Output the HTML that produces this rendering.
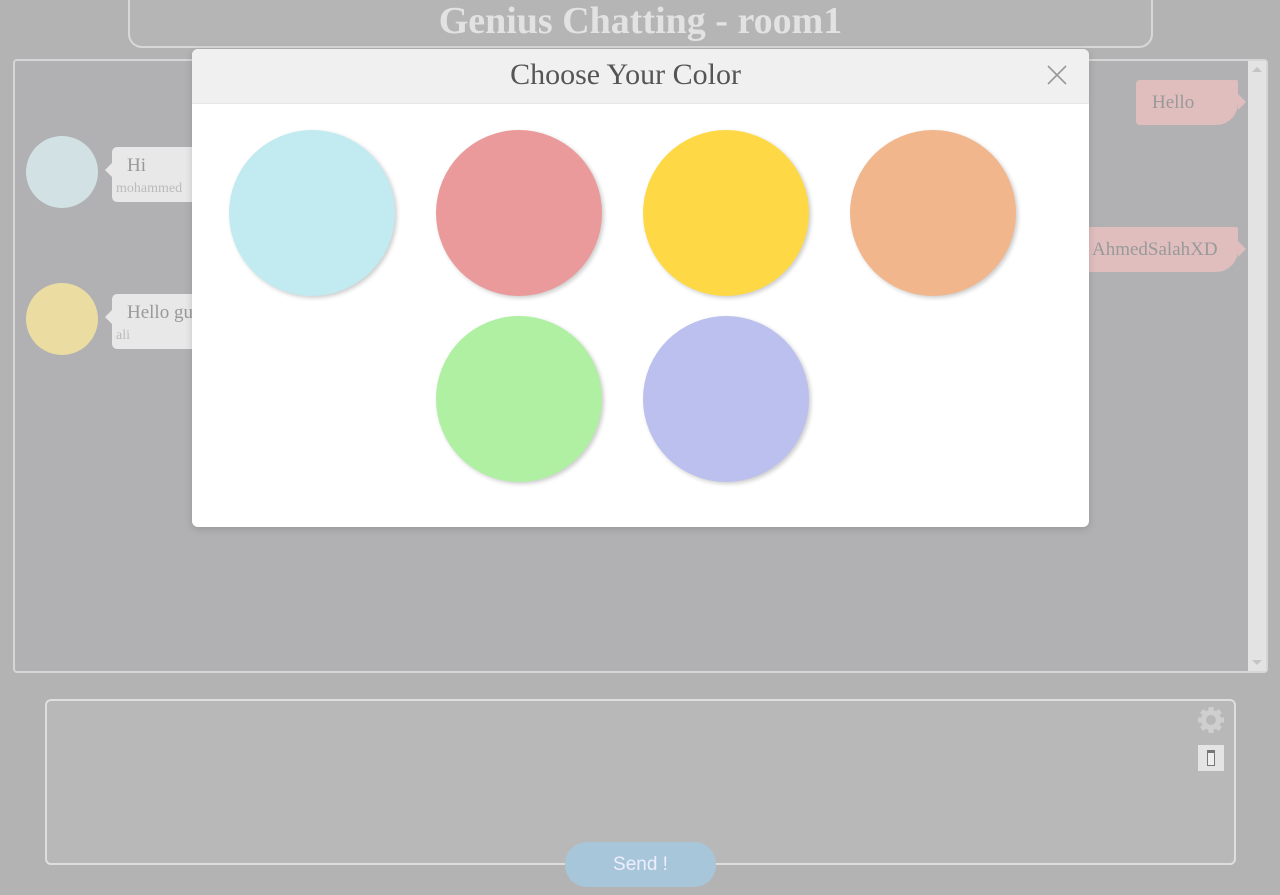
<!DOCTYPE html>
<html><head><meta charset="utf-8"><style>
*{box-sizing:border-box;margin:0;padding:0}
body{width:1280px;height:895px;background:#b3b3b4;position:relative;overflow:hidden;font-family:"Liberation Serif",serif}
.hdr{position:absolute;left:128px;top:-10px;width:1025px;height:58px;border:2px solid #d8d8d8;border-radius:0 0 14px 14px;background:#b5b5b5;text-align:center;color:#e2e2e2;font-weight:bold;font-size:38px;line-height:58px;padding-top:0}
.chat{position:absolute;left:13px;top:59px;width:1255px;height:614px;border:2px solid #d6d6d6;border-radius:4px;background:#b1b1b3}
.sb{position:absolute;left:1248px;top:61px;width:18px;height:610px;background:#e3e3e3}
.av{position:absolute;width:72px;height:72px;border-radius:50%}
.bub{position:absolute;background:#e8e8e8;border-radius:5px;color:#999}
.bub .t{position:absolute;left:15px;top:8px;font-size:19px}
.bub .n{position:absolute;left:4px;top:34px;font-size:14px;color:#bbb}
.bub:before{content:"";position:absolute;left:-7px;top:16px;border:7px solid transparent;border-left:0;border-right-color:#e8e8e8}
.rb{position:absolute;background:#e0bebe;color:#999;font-size:19px;border-radius:4px 2px 22px 4px}
.rb:after{content:"";position:absolute;right:-8px;top:14px;border:8px solid transparent;border-right:0;border-left-color:#e0bebe}
.inp{position:absolute;left:45px;top:699px;width:1191px;height:166px;border:2px solid #dedede;border-radius:6px;background:#b8b8b8}
.send{position:absolute;left:565px;top:842px;width:151px;height:45px;border-radius:22px;background:#a8c6da;color:#eef;font-family:"Liberation Sans",sans-serif;font-size:19px;text-align:center;line-height:45px}
.modal{position:absolute;left:192px;top:49px;width:897px;height:478px;background:#fff;border-radius:6px;overflow:hidden;box-shadow:0 2px 8px rgba(0,0,0,.15)}
.mh{height:55px;background:#f0f0f0;border-bottom:1px solid #e6e6e6;text-align:center;font-size:30px;color:#555;line-height:52px;padding-right:30px}
.c{position:absolute;width:166px;height:166px;border-radius:50%;box-shadow:2px 2px 4px rgba(0,0,0,.2)}
</style></head><body>
<div class="hdr">Genius Chatting - room1</div>
<div class="chat"></div>
<div class="sb"><div style="margin:6px auto 0;width:0;border:5px solid transparent;border-top:0;border-bottom-color:#c4c4c4"></div><div style="position:absolute;bottom:6px;left:4px;border:5px solid transparent;border-bottom:0;border-top-color:#c4c4c4"></div></div>
<div class="av" style="left:26px;top:136px;background:#d2e2e4"></div>
<div class="bub" style="left:112px;top:147px;width:100px;height:55px"><span class="t">Hi</span><span class="n">mohammed</span></div>
<div class="av" style="left:26px;top:283px;background:#ebdca2"></div>
<div class="bub" style="left:112px;top:294px;width:100px;height:55px"><span class="t">Hello gu</span><span class="n">ali</span></div>
<div class="rb" style="left:1136px;top:80px;width:102px;height:45px;padding:12px 0 0 16px">Hello</div>
<div class="rb" style="left:1080px;top:227px;width:158px;height:45px;padding:12px 0 0 12px">AhmedSalahXD</div>
<div class="inp">
<svg style="position:absolute;left:1150px;top:5px" width="28" height="28" viewBox="0 0 28 28"><g fill="#cfcfcf"><circle cx="14" cy="14" r="10"/><rect x="11.5" y="1" width="5" height="26"/><rect x="11.5" y="1" width="5" height="26" transform="rotate(45 14 14)"/><rect x="11.5" y="1" width="5" height="26" transform="rotate(90 14 14)"/><rect x="11.5" y="1" width="5" height="26" transform="rotate(135 14 14)"/></g><circle cx="14" cy="14" r="5" fill="#b8b8b8"/></svg>
<div style="position:absolute;left:1151px;top:44px;width:26px;height:26px;background:#e4e4e4"><div style="position:absolute;left:9px;top:5px;width:8px;height:16px;background:#777"></div><div style="position:absolute;left:10px;top:8px;width:6px;height:12px;background:#eee"></div></div>
</div>
<div class="send">Send !</div>
<div class="modal">
<div class="mh">Choose Your Color</div>
<svg style="position:absolute;left:855px;top:16px" width="20" height="20" viewBox="0 0 20 20"><path d="M1 1L19 19M19 1L1 19" stroke="#999" stroke-width="1.6"/></svg>
<div class="c" style="left:37px;top:81px;background:#c1ebf1"></div>
<div class="c" style="left:244px;top:81px;background:#ea9a9a"></div>
<div class="c" style="left:451px;top:81px;background:#fed945"></div>
<div class="c" style="left:658px;top:81px;background:#f1b68c"></div>
<div class="c" style="left:244px;top:267px;background:#aff0a2"></div>
<div class="c" style="left:451px;top:267px;background:#bbc0ef"></div>
</div>
</body></html>
